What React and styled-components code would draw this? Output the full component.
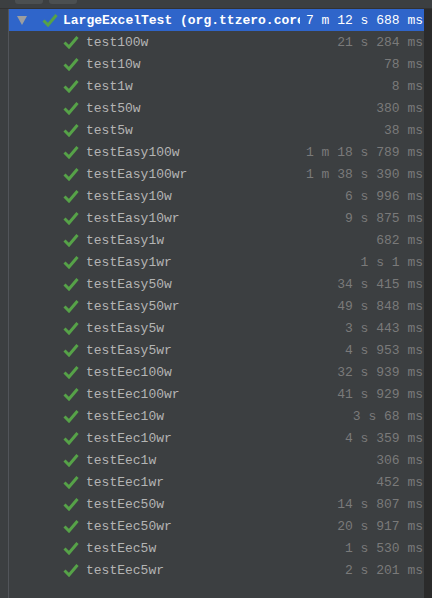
import React from "react";
import styled, { createGlobalStyle } from "styled-components";

const Global = createGlobalStyle`
  html, body {
    margin: 0;
    padding: 0;
    background: #3c3f41;
  }
  * { box-sizing: border-box; }
`;

const Page = styled.div`
  width: 432px;
  height: 598px;
  background: #3c3f41;
  display: flex;
  flex-direction: column;
  overflow: hidden;
  font-family: "Liberation Mono", "DejaVu Sans Mono", monospace;
  font-size: 13px;
`;

const TopBar = styled.div`
  height: 9px;
  flex: none;
  display: flex;
  gap: 6px;
  padding-left: 15px;
  border-bottom: 1px solid #323232;
  background: #3c3f41;
`;

const TabStub = styled.div`
  width: 28px;
  height: 4px;
  background: #4b4f51;
  border-radius: 0 0 3px 3px;
`;

const Body = styled.div`
  flex: 1;
  display: flex;
  min-height: 0;
`;

const Gutter = styled.div`
  width: 9px;
  flex: none;
  border-right: 1px solid #52555a;
`;

const Tree = styled.div`
  flex: 1;
  min-width: 0;
  overflow: hidden;
  display: flex;
  flex-direction: column;
`;

const ScrollStrip = styled.div`
  width: 8px;
  flex: none;
  background: #2b2b2b;
`;

const Row = styled.div`
  height: 22px;
  flex: none;
  display: flex;
  align-items: center;
  padding-left: ${(p) => p.$indent}px;
  padding-right: 1px;
  background: ${(p) => (p.$selected ? "#2f65ca" : "transparent")};
  white-space: nowrap;
`;

const Arrow = styled.span`
  flex: none;
  width: 0;
  height: 0;
  border-left: 5px solid transparent;
  border-right: 5px solid transparent;
  border-top: 9px solid #9c9ea0;
  margin-right: 15px;
`;

const Check = styled.svg`
  width: 16px;
  height: 14px;
  flex: none;
  margin-right: ${(p) => p.$gap}px;
`;

const Name = styled.span`
  flex: 1;
  min-width: 0;
  overflow: hidden;
  color: ${(p) => (p.$selected ? "#ffffff" : "#b4b4b4")};
  font-weight: ${(p) => (p.$selected ? 700 : 400)};
`;

const Time = styled.span`
  flex: none;
  color: ${(p) => (p.$selected ? "#ffffff" : "#7a7a7a")};
  padding-left: ${(p) => (p.$selected ? 6 : 2)}px;
`;

const CheckIcon = ({ gap }) => (
  <Check $gap={gap} viewBox="0 0 16 14">
    <path
      d="M1.5 7.5 L6 12 L14.5 2"
      fill="none"
      stroke="#56a248"
      strokeWidth="3"
      strokeLinecap="butt"
      strokeLinejoin="miter"
    />
  </Check>
);

const tests = [
  ["test100w", "21 s 284 ms"],
  ["test10w", "78 ms"],
  ["test1w", "8 ms"],
  ["test50w", "380 ms"],
  ["test5w", "38 ms"],
  ["testEasy100w", "1 m 18 s 789 ms"],
  ["testEasy100wr", "1 m 38 s 390 ms"],
  ["testEasy10w", "6 s 996 ms"],
  ["testEasy10wr", "9 s 875 ms"],
  ["testEasy1w", "682 ms"],
  ["testEasy1wr", "1 s 1 ms"],
  ["testEasy50w", "34 s 415 ms"],
  ["testEasy50wr", "49 s 848 ms"],
  ["testEasy5w", "3 s 443 ms"],
  ["testEasy5wr", "4 s 953 ms"],
  ["testEec100w", "32 s 939 ms"],
  ["testEec100wr", "41 s 929 ms"],
  ["testEec10w", "3 s 68 ms"],
  ["testEec10wr", "4 s 359 ms"],
  ["testEec1w", "306 ms"],
  ["testEec1wr", "452 ms"],
  ["testEec50w", "14 s 807 ms"],
  ["testEec50wr", "20 s 917 ms"],
  ["testEec5w", "1 s 530 ms"],
  ["testEec5wr", "2 s 201 ms"],
];

export default function App() {
  return (
    <Page>
      <Global />
      <TopBar>
        <TabStub />
        <TabStub />
      </TopBar>
      <Body>
        <Gutter />
        <Tree>
          <Row $selected $indent={8}>
            <Arrow />
            <CheckIcon gap={5} />
            <Name $selected>LargeExcelTest (org.ttzero.core.LargeExcelTest)</Name>
            <Time $selected>7 m 12 s 688 ms</Time>
          </Row>
          {tests.map(([name, time]) => (
            <Row key={name} $indent={54}>
              <CheckIcon gap={7} />
              <Name>{name}</Name>
              <Time>{time}</Time>
            </Row>
          ))}
        </Tree>
        <ScrollStrip />
      </Body>
    </Page>
  );
}
